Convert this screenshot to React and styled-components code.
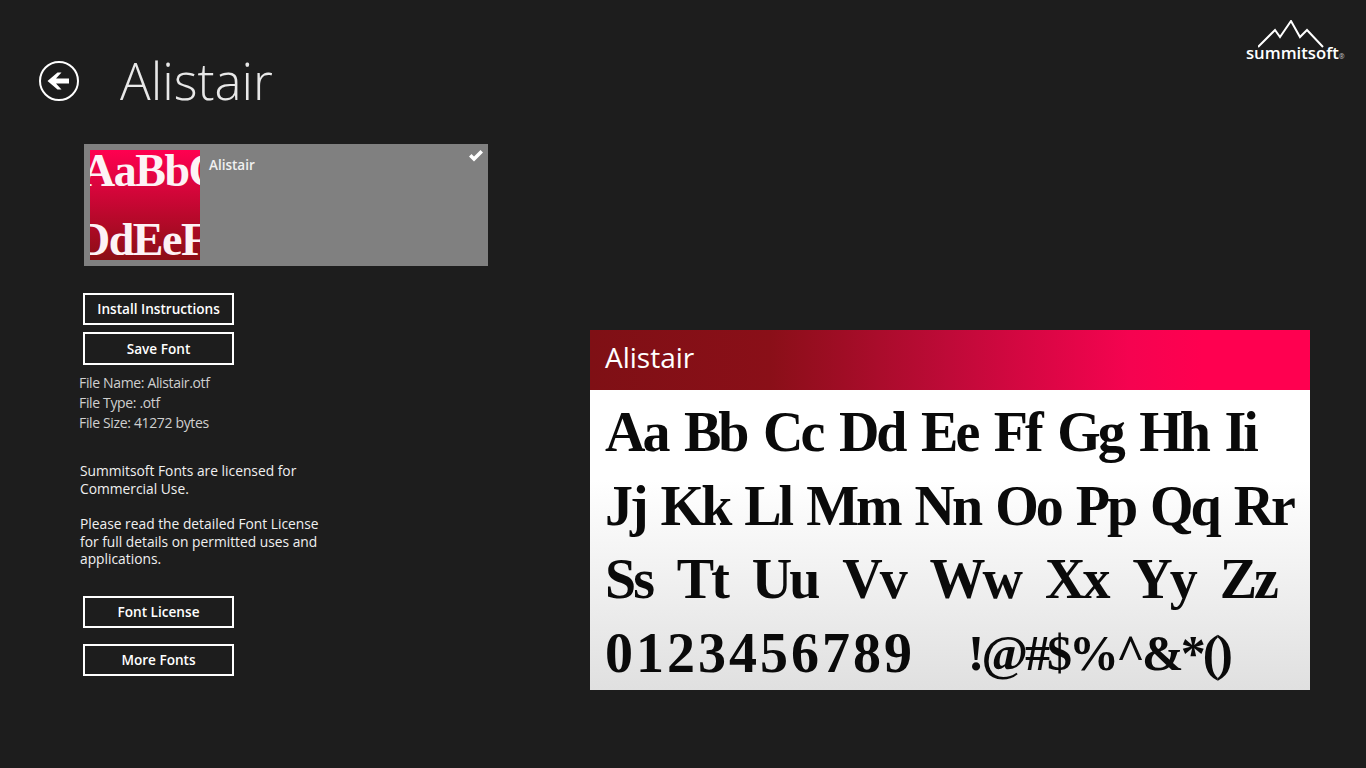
import React from "react";
import styled, { createGlobalStyle } from "styled-components";

const rows = [
    { glyphs: ["Aa", "Bb", "Cc", "Dd", "Ee", "Ff", "Gg", "Hh", "Ii"], width: 651 },
    { glyphs: ["Jj", "Kk", "Ll", "Mm", "Nn", "Oo", "Pp", "Qq", "Rr"], width: 688 },
    { glyphs: ["Ss", "Tt", "Uu", "Vv", "Ww", "Xx", "Yy", "Zz"], width: 671 },
];

const App = () => {
    return (
        <Page>
            <GlobalStyle />
            <Header>
                <BackIcon viewBox="0 0 40 40" aria-label="Back">
                    <circle cx="20" cy="20" r="19" fill="none" stroke="#fff" strokeWidth="2" />
                    <path d="M8.5 20 L18.5 11.5 L22.5 11.5 L17 17.5 L30 17.5 L30 22.5 L17 22.5 L22.5 28.5 L18.5 28.5 Z" fill="#fff" />
                </BackIcon>
                <PageTitle>Alistair</PageTitle>
                <Logo>
                    <Mountains viewBox="0 0 66 28" aria-hidden="true">
                        <path
                            d="M0 27 L17 10 L22 17 L33 1 L42 17 L49 10 L65 27"
                            fill="none"
                            stroke="#fff"
                            strokeWidth="2"
                        />
                    </Mountains>
                    <LogoName>
                        summitsoft<LogoMark>®</LogoMark>
                    </LogoName>
                </Logo>
            </Header>
            <Main>
                <LeftColumn>
                    <FontCard>
                        <Thumb>
                            <ThumbText $margin="-4px 0 0 -8px">AaBbC</ThumbText>
                            <ThumbText $margin="0 0 -5px -13px">DdEeF</ThumbText>
                        </Thumb>
                        <CardName>Alistair</CardName>
                        <CheckIcon viewBox="0 0 16 14" aria-hidden="true">
                            <path d="M1 7.5 L3.5 5 L6 7.5 L12.5 1 L15 3.5 L6 12.5 Z" fill="#fff" />
                        </CheckIcon>
                    </FontCard>
                    <OutlineButton $top="27px">Install Instructions</OutlineButton>
                    <OutlineButton $top="7px" $height="33px">Save Font</OutlineButton>
                    <FileInfo>
                        <div>File Name: Alistair.otf</div>
                        <div>File Type: .otf</div>
                        <div>File Size: 41272 bytes</div>
                    </FileInfo>
                    <LicenseText $top="29px">
                        Summitsoft Fonts are licensed for
                        <br />
                        Commercial Use.
                    </LicenseText>
                    <LicenseText $top="18px">
                        Please read the detailed Font License
                        <br />
                        for full details on permitted uses and
                        <br />
                        applications.
                    </LicenseText>
                    <OutlineButton $top="28px">Font License</OutlineButton>
                    <OutlineButton $top="16px">More Fonts</OutlineButton>
                </LeftColumn>
                <PreviewPanel>
                    <PreviewHeader>Alistair</PreviewHeader>
                    <PreviewBody>
                        {rows.map((row) => (
                            <GlyphRow key={row.glyphs[0]} $width={row.width}>
                                {row.glyphs.map((glyph) => (
                                    <span key={glyph}>{glyph}</span>
                                ))}
                            </GlyphRow>
                        ))}
                        <GlyphRow $width={625}>
                            <Digits>0123456789</Digits>
                            <Symbols>!@#$%^&amp;*()</Symbols>
                        </GlyphRow>
                    </PreviewBody>
                </PreviewPanel>
            </Main>
        </Page>
    );
};

export default App;

const GlobalStyle = createGlobalStyle`
    html, body {
        margin: 0;
        padding: 0;
        background: #1d1d1d;
    }
`;

const Page = styled.div`
    width: 1366px;
    height: 768px;
    overflow: hidden;
    background: #1d1d1d;
    color: #fff;
    font-family: "Open Sans", "Noto Sans", sans-serif;
`;

const Header = styled.header`
    display: flex;
    align-items: flex-start;
    height: 144px;
    box-sizing: border-box;
    padding: 20px 20px 0 39px;
`;

const BackIcon = styled.svg`
    width: 40px;
    height: 40px;
    margin-top: 41px;
    flex-shrink: 0;
`;

const PageTitle = styled.h1`
    margin: 19px 0 0 41px;
    font-size: 51px;
    font-weight: 300;
    line-height: 82px;
    color: #e8e8e8;
`;

const Logo = styled.div`
    margin-left: auto;
    display: flex;
    flex-direction: column;
    width: 100px;
`;

const Mountains = styled.svg`
    width: 66px;
    height: 28px;
    margin-left: 12px;
`;

const LogoName = styled.div`
    margin-top: -4px;
    font-size: 16.7px;
    line-height: 18px;
    font-weight: 600;
    white-space: nowrap;
`;

const LogoMark = styled.span`
    font-size: 7px;
    color: #bbb;
`;

const Main = styled.main`
    display: flex;
`;

const LeftColumn = styled.section`
    width: 590px;
    box-sizing: border-box;
    padding-left: 80px;
    flex-shrink: 0;
`;

const FontCard = styled.div`
    position: relative;
    display: flex;
    width: 404px;
    height: 122px;
    box-sizing: border-box;
    margin-left: 4px;
    padding: 6px;
    background: #808080;
`;

const Thumb = styled.div`
    width: 110px;
    height: 110px;
    overflow: hidden;
    display: flex;
    flex-direction: column;
    justify-content: space-between;
    background: linear-gradient(#ff0050, #8b0e14);
`;

const ThumbText = styled.div`
    margin: ${(p) => p.$margin};
    font-family: "Liberation Serif", serif;
    font-size: 46px;
    line-height: 50px;
    font-weight: 700;
    letter-spacing: -1.5px;
    white-space: nowrap;
    color: #fdf2f5;
`;

const CardName = styled.div`
    margin: 6px 0 0 9px;
    font-size: 13.5px;
    line-height: 19px;
    font-weight: 600;
    color: #f0f0f0;
`;

const CheckIcon = styled.svg`
    position: absolute;
    top: 5px;
    right: 4px;
    width: 16px;
    height: 14px;
`;

const OutlineButton = styled.button`
    display: block;
    width: 151px;
    height: ${(p) => p.$height || "32px"};
    margin: ${(p) => p.$top} 0 0 3px;
    padding: 0 0 1px;
    border: 2px solid #fff;
    background: transparent;
    color: #fff;
    font-family: inherit;
    font-size: 13.6px;
    font-weight: 600;
`;

const FileInfo = styled.div`
    margin: 8px 0 0 -1px;
    font-size: 14px;
    letter-spacing: -0.35px;
    line-height: 20px;
    color: #cfcfcf;
`;

const LicenseText = styled.p`
    margin: ${(p) => p.$top} 0 0;
    font-size: 13.8px;
    line-height: 17.5px;
    color: #f0f0f0;
`;

const PreviewPanel = styled.section`
    width: 720px;
    height: 360px;
    margin-top: 186px;
    display: flex;
    flex-direction: column;
`;

const PreviewHeader = styled.div`
    height: 60px;
    flex-shrink: 0;
    box-sizing: border-box;
    padding-left: 15px;
    font-size: 28px;
    line-height: 55px;
    color: #fff;
    background: linear-gradient(90deg, #7f1015 0%, #8a0f18 25%, #bf0a38 50%, #f50350 75%, #ff0050 85%);
`;

const PreviewBody = styled.div`
    flex: 1;
    box-sizing: border-box;
    padding: 6px 0 0 15px;
    background: linear-gradient(#fff 0%, #fff 30%, #e0e0e0 100%);
`;

const GlyphRow = styled.div`
    display: flex;
    justify-content: space-between;
    width: ${(p) => p.$width}px;
    height: 73.5px;
    font-family: "Liberation Serif", serif;
    font-size: 56px;
    line-height: 73.5px;
    font-weight: 700;
    letter-spacing: -3px;
    color: #0a0a0a;
    white-space: nowrap;
`;

const Digits = styled.span`
    letter-spacing: 3px;
`;

const Symbols = styled.span`
    font-size: 50px;
`;
